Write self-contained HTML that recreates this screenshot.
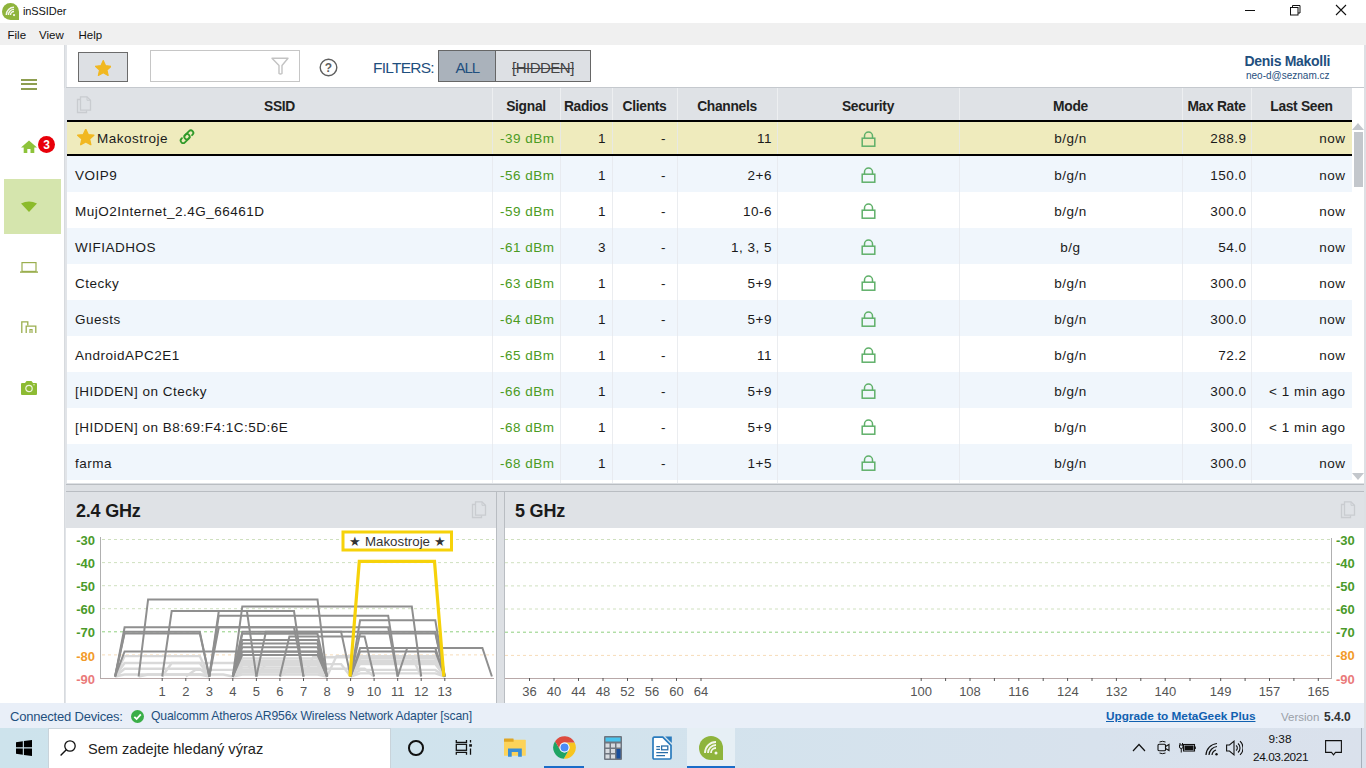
<!DOCTYPE html><html><head><meta charset="utf-8"><style>
*{margin:0;padding:0;box-sizing:border-box}
html,body{width:1366px;height:768px;overflow:hidden;background:#fff;font-family:"Liberation Sans", sans-serif;color:#1a1a1a}
.a{position:absolute}
.t{position:absolute;white-space:pre;line-height:1}
</style></head><body><div class="a" style="left:0;top:0;width:1366px;height:23px;background:#fff"></div>
<svg class="a" style="left:2px;top:3px" width="17" height="17" viewBox="0 0 24 24">
<path d="M12 0 A12 12 0 1 0 12 24 H24 V12 A12 12 0 0 0 12 0Z" fill="#8eb43c"/>
<path d="M6 17 A11 11 0 0 1 17 6" stroke="#f4f7ea" stroke-width="2" fill="none"/>
<path d="M9 17 A8 8 0 0 1 17 9" stroke="#f4f7ea" stroke-width="2" fill="none"/>
<path d="M12 17 A5 5 0 0 1 17 12" stroke="#f4f7ea" stroke-width="2" fill="none"/>
<circle cx="17" cy="17" r="1.6" fill="#f4f7ea"/></svg>
<div class="t" style="left:23px;top:6px;font-size:11px;letter-spacing:-0.1px;color:#111">inSSIDer</div>
<div class="a" style="left:1245px;top:10px;width:10px;height:1px;background:#111"></div>
<svg class="a" style="left:1289px;top:4px" width="13" height="13" viewBox="0 0 13 13">
<rect x="1.5" y="3.5" width="7.5" height="7.5" fill="none" stroke="#111" stroke-width="1"/>
<path d="M3.5 3.5 V1.5 H11 V9 H9" fill="none" stroke="#111" stroke-width="1"/></svg>
<svg class="a" style="left:1335px;top:4px" width="12" height="12" viewBox="0 0 12 12">
<path d="M1 1 L11 11 M11 1 L1 11" stroke="#111" stroke-width="1.1"/></svg>
<div class="a" style="left:0;top:23px;width:1366px;height:22px;background:#f0f0f0"></div>
<div class="t" style="left:7.5px;top:29.5px;font-size:11.5px;color:#111">File</div>
<div class="t" style="left:39px;top:29.5px;font-size:11.5px;color:#111">View</div>
<div class="t" style="left:78.5px;top:29.5px;font-size:11.5px;color:#111">Help</div>
<div class="a" style="left:0;top:45px;width:64px;height:658px;background:#fff"></div>
<div class="a" style="left:64px;top:45px;width:3px;height:658px;background:#e1e4e8"></div>
<div class="a" style="left:64px;top:45px;width:1px;height:658px;background:#d7dade"></div>
<div class="a" style="left:21px;top:79px;width:16px;height:1.5px;background:#8e9e50"></div>
<div class="a" style="left:21px;top:83px;width:16px;height:1.5px;background:#8e9e50"></div>
<div class="a" style="left:21px;top:87.5px;width:16px;height:2px;background:#8e9e50"></div>
<svg class="a" style="left:21px;top:140px" width="16" height="13" viewBox="0 0 16 13">
<path d="M0 7.5 L8 0.5 L16 7.5 L13.3 7.5 L13.3 13 L9.5 13 L9.5 9 L6.3 9 L6.3 13 L2.7 13 L2.7 7.5 Z" fill="#8dc33a"/></svg>
<div class="a" style="left:38px;top:136px;width:17px;height:17px;border-radius:50%;background:#e8000a"></div>
<div class="t" style="left:38px;top:138.5px;width:17px;text-align:center;font-size:12px;font-weight:bold;color:#fff">3</div>
<div class="a" style="left:4px;top:179px;width:57px;height:55px;background:#d5e5ad"></div>
<svg class="a" style="left:21px;top:201px" width="16" height="11" viewBox="0 0 16 11">
<path d="M0 2.5 Q8 -1.5 16 2.5 L8 11 Z" fill="#8cbb2c"/></svg>
<svg class="a" style="left:20px;top:262px" width="18" height="11" viewBox="0 0 18 11">
<rect x="2" y="0.6" width="14" height="8.8" fill="none" stroke="#9aae4e" stroke-width="1.2"/>
<rect x="0" y="9.4" width="18" height="1.4" fill="#9aae4e"/></svg>
<svg class="a" style="left:21px;top:321px" width="16" height="12" viewBox="0 0 16 12">
<path d="M0.8 12 V0.8 H6.8 V4.5" fill="none" stroke="#9aae4e" stroke-width="1.3"/>
<path d="M5.2 12 V5.2 H14.8 V12" fill="none" stroke="#9aae4e" stroke-width="1.3"/>
<path d="M9 12 V8.5 H11 V12" fill="none" stroke="#9aae4e" stroke-width="1.2"/></svg>
<svg class="a" style="left:21px;top:381px" width="16" height="14" viewBox="0 0 16 14">
<path d="M0 3 Q0 2 1 2 L4 2 L5.5 0 L10.5 0 L12 2 L15 2 Q16 2 16 3 L16 13 Q16 14 15 14 L1 14 Q0 14 0 13Z" fill="#8dbb33"/>
<circle cx="8" cy="7.5" r="3.2" fill="none" stroke="#eef5dd" stroke-width="1.2"/>
<circle cx="13" cy="3.8" r="0.7" fill="#eef5dd"/></svg>
<div class="a" style="left:67px;top:45px;width:1299px;height:42px;background:#fff"></div>
<div class="a" style="left:66px;top:87px;width:1300px;height:1px;background:#c5c9ce"></div>
<div class="a" style="left:78px;top:52px;width:50px;height:30px;background:#dde0e4;border:1px solid #6b6b6b"></div>
<svg class="a" style="left:94.5px;top:59.5px" width="16.5" height="16.5" viewBox="1.2 1 21.6 21">
<path d="M12 1.5 L15.1 8.1 L22.3 8.9 L16.9 13.8 L18.4 20.9 L12 17.3 L5.6 20.9 L7.1 13.8 L1.7 8.9 L8.9 8.1Z" fill="#f1b821" stroke="#f1b821" stroke-width="1.5" stroke-linejoin="round"/></svg>
<div class="a" style="left:150px;top:50px;width:150px;height:32px;border:1px solid #c6c6c6;background:#fff"></div>
<svg class="a" style="left:271px;top:57px" width="18" height="18" viewBox="0 0 18 18">
<path d="M1 1.2 H17 L11 8.5 V16.5 Q9.5 17.5 8 16.5 V8.5 Z" fill="none" stroke="#c3c3c3" stroke-width="1.4" stroke-linejoin="round"/></svg>
<svg class="a" style="left:319px;top:58px" width="19" height="19" viewBox="0 0 19 19">
<circle cx="9.5" cy="9.5" r="8.3" fill="none" stroke="#5f5f5f" stroke-width="1.4"/>
<text x="9.5" y="14" text-anchor="middle" font-family="Liberation Sans" font-weight="bold" font-size="12" fill="#5f5f5f">?</text></svg>
<div class="t" style="left:373px;top:60px;font-size:15.5px;color:#1f4f7e;letter-spacing:-0.75px">FILTERS:</div>
<div class="a" style="left:438px;top:50px;width:58px;height:32px;background:#aab2bb;border:1px solid #666"></div>
<div class="a" style="left:495px;top:50px;width:96px;height:32px;background:#dde0e4;border:1px solid #666"></div>
<div class="t" style="left:455.5px;top:60px;font-size:15px;color:#1f4f7e;letter-spacing:-1px">ALL</div>
<div class="t" style="left:512px;top:60px;font-size:15px;color:#444;letter-spacing:-0.5px;text-decoration:line-through">[HIDDEN]</div>
<div class="t" style="left:1244.5px;top:53.6px;font-size:14px;letter-spacing:-0.3px;font-weight:bold;color:#1f4f7e">Denis Makolli</div>
<div class="t" style="left:1246px;top:71px;font-size:10px;color:#1f4f7e">neo-d@seznam.cz</div>
<div class="a" style="left:64px;top:88px;width:1288px;height:32px;background:#dfe2e6"></div>
<div class="a" style="left:492px;top:88px;width:1px;height:32px;background:#edeff1"></div>
<div class="a" style="left:560px;top:88px;width:1px;height:32px;background:#edeff1"></div>
<div class="a" style="left:612px;top:88px;width:1px;height:32px;background:#edeff1"></div>
<div class="a" style="left:677px;top:88px;width:1px;height:32px;background:#edeff1"></div>
<div class="a" style="left:777px;top:88px;width:1px;height:32px;background:#edeff1"></div>
<div class="a" style="left:959px;top:88px;width:1px;height:32px;background:#edeff1"></div>
<div class="a" style="left:1182px;top:88px;width:1px;height:32px;background:#edeff1"></div>
<div class="a" style="left:1251px;top:88px;width:1px;height:32px;background:#edeff1"></div>
<div class="t" style="left:67px;top:99.6px;width:425px;text-align:center;font-size:13.8px;letter-spacing:-0.3px;font-weight:bold;color:#222">SSID</div>
<div class="t" style="left:492px;top:99.6px;width:68px;text-align:center;font-size:13.8px;letter-spacing:-0.3px;font-weight:bold;color:#222">Signal</div>
<div class="t" style="left:560px;top:99.6px;width:52px;text-align:center;font-size:13.8px;letter-spacing:-0.3px;font-weight:bold;color:#222">Radios</div>
<div class="t" style="left:612px;top:99.6px;width:65px;text-align:center;font-size:13.8px;letter-spacing:-0.3px;font-weight:bold;color:#222">Clients</div>
<div class="t" style="left:677px;top:99.6px;width:100px;text-align:center;font-size:13.8px;letter-spacing:-0.3px;font-weight:bold;color:#222">Channels</div>
<div class="t" style="left:777px;top:99.6px;width:182px;text-align:center;font-size:13.8px;letter-spacing:-0.3px;font-weight:bold;color:#222">Security</div>
<div class="t" style="left:959px;top:99.6px;width:223px;text-align:center;font-size:13.8px;letter-spacing:-0.3px;font-weight:bold;color:#222">Mode</div>
<div class="t" style="left:1182px;top:99.6px;width:69px;text-align:center;font-size:13.8px;letter-spacing:-0.3px;font-weight:bold;color:#222">Max Rate</div>
<div class="t" style="left:1251px;top:99.6px;width:101px;text-align:center;font-size:13.8px;letter-spacing:-0.3px;font-weight:bold;color:#222">Last Seen</div>
<svg class="a" style="left:76px;top:96px" width="16" height="18" viewBox="0 0 16 18">
<path d="M4.5 3.5 H1.5 V16.5 H10.5 V14.5" fill="none" stroke="#c9ccd0" stroke-width="1.3"/>
<path d="M4.5 0.8 H11 L14.5 4.3 V14.2 H4.5 Z" fill="none" stroke="#c9ccd0" stroke-width="1.3"/>
<path d="M11 0.8 V4.3 H14.5" fill="none" stroke="#c9ccd0" stroke-width="1"/></svg>
<div class="a" style="left:67px;top:120px;width:1285px;height:363px;background:#fff"></div>
<div class="a" style="left:67px;top:120px;width:1285px;height:36px;background:#efebbd;border-top:2px solid #000;border-bottom:2px solid #000"></div>
<svg class="a" style="left:77px;top:129px" width="17.5" height="16.5" viewBox="1.2 1 21.6 21">
<path d="M12 1.5 L15.1 8.1 L22.3 8.9 L16.9 13.8 L18.4 20.9 L12 17.3 L5.6 20.9 L7.1 13.8 L1.7 8.9 L8.9 8.1Z" fill="#f1b821" stroke="#f1b821" stroke-width="1.8" stroke-linejoin="round"/></svg>
<div class="t" style="left:97px;top:131.5px;font-size:13.5px;letter-spacing:0.5px">Makostroje</div>
<svg class="a" style="left:178px;top:128px" width="18" height="18" viewBox="0 0 18 18">
<g transform="translate(9 8.7) rotate(-45)" fill="none" stroke="#309a2a" stroke-width="1.8" stroke-linecap="round">
<path d="M1.2 2.5 H-0.2 A2.5 2.5 0 0 1 -0.2 -2.5 H5.4 A2.5 2.5 0 0 1 5.4 2.5 H4.6"/>
<path d="M-1.2 -2.5 H0.2 A2.5 2.5 0 0 1 0.2 2.5 H-5.4 A2.5 2.5 0 0 1 -5.4 -2.5 H-4.6"/></g></svg>
<div class="t" style="left:492px;top:131.5px;width:62.5px;text-align:right;font-size:13.5px;letter-spacing:0.5px;color:#4b9b23">-39 dBm</div>
<div class="t" style="left:560px;top:131.5px;width:46px;text-align:right;font-size:13.5px;letter-spacing:0.5px">1</div>
<div class="t" style="left:612px;top:131.5px;width:54px;text-align:right;font-size:13.5px;letter-spacing:0.5px">-</div>
<div class="t" style="left:677px;top:131.5px;width:95px;text-align:right;font-size:13.5px;letter-spacing:0.5px">11</div>
<svg class="a" style="left:861.0px;top:131px" width="15" height="16" viewBox="0 0 15 16">
<path d="M3.5 7 V5 A4 4 0 0 1 11.5 5 V7" fill="none" stroke="#5fb069" stroke-width="1.5"/>
<rect x="1.2" y="7.2" width="12.6" height="8" fill="none" stroke="#5fb069" stroke-width="1.5"/></svg>
<div class="t" style="left:959px;top:131.5px;width:223px;text-align:center;font-size:13.5px;letter-spacing:0.5px">b/g/n</div>
<div class="t" style="left:1182px;top:131.5px;width:64.5px;text-align:right;font-size:13.5px;letter-spacing:0.5px">288.9</div>
<div class="t" style="left:1251px;top:131.5px;width:94.5px;text-align:right;font-size:13.5px;letter-spacing:0.5px">now</div>
<div class="a" style="left:67px;top:156px;width:1285px;height:36px;background:#f0f6fc"></div>
<div class="t" style="left:75px;top:168.5px;font-size:13.5px;letter-spacing:0.5px">VOIP9</div>
<div class="t" style="left:492px;top:168.5px;width:62.5px;text-align:right;font-size:13.5px;letter-spacing:0.5px;color:#4b9b23">-56 dBm</div>
<div class="t" style="left:560px;top:168.5px;width:46px;text-align:right;font-size:13.5px;letter-spacing:0.5px">1</div>
<div class="t" style="left:612px;top:168.5px;width:54px;text-align:right;font-size:13.5px;letter-spacing:0.5px">-</div>
<div class="t" style="left:677px;top:168.5px;width:95px;text-align:right;font-size:13.5px;letter-spacing:0.5px">2+6</div>
<svg class="a" style="left:861.0px;top:167px" width="15" height="16" viewBox="0 0 15 16">
<path d="M3.5 7 V5 A4 4 0 0 1 11.5 5 V7" fill="none" stroke="#5fb069" stroke-width="1.5"/>
<rect x="1.2" y="7.2" width="12.6" height="8" fill="none" stroke="#5fb069" stroke-width="1.5"/></svg>
<div class="t" style="left:959px;top:168.5px;width:223px;text-align:center;font-size:13.5px;letter-spacing:0.5px">b/g/n</div>
<div class="t" style="left:1182px;top:168.5px;width:64.5px;text-align:right;font-size:13.5px;letter-spacing:0.5px">150.0</div>
<div class="t" style="left:1251px;top:168.5px;width:94.5px;text-align:right;font-size:13.5px;letter-spacing:0.5px">now</div>
<div class="a" style="left:67px;top:192px;width:1285px;height:36px;background:#ffffff"></div>
<div class="t" style="left:75px;top:204.5px;font-size:13.5px;letter-spacing:0.5px">MujO2Internet_2.4G_66461D</div>
<div class="t" style="left:492px;top:204.5px;width:62.5px;text-align:right;font-size:13.5px;letter-spacing:0.5px;color:#4b9b23">-59 dBm</div>
<div class="t" style="left:560px;top:204.5px;width:46px;text-align:right;font-size:13.5px;letter-spacing:0.5px">1</div>
<div class="t" style="left:612px;top:204.5px;width:54px;text-align:right;font-size:13.5px;letter-spacing:0.5px">-</div>
<div class="t" style="left:677px;top:204.5px;width:95px;text-align:right;font-size:13.5px;letter-spacing:0.5px">10-6</div>
<svg class="a" style="left:861.0px;top:203px" width="15" height="16" viewBox="0 0 15 16">
<path d="M3.5 7 V5 A4 4 0 0 1 11.5 5 V7" fill="none" stroke="#5fb069" stroke-width="1.5"/>
<rect x="1.2" y="7.2" width="12.6" height="8" fill="none" stroke="#5fb069" stroke-width="1.5"/></svg>
<div class="t" style="left:959px;top:204.5px;width:223px;text-align:center;font-size:13.5px;letter-spacing:0.5px">b/g/n</div>
<div class="t" style="left:1182px;top:204.5px;width:64.5px;text-align:right;font-size:13.5px;letter-spacing:0.5px">300.0</div>
<div class="t" style="left:1251px;top:204.5px;width:94.5px;text-align:right;font-size:13.5px;letter-spacing:0.5px">now</div>
<div class="a" style="left:67px;top:228px;width:1285px;height:36px;background:#f0f6fc"></div>
<div class="t" style="left:75px;top:240.5px;font-size:13.5px;letter-spacing:0.5px">WIFIADHOS</div>
<div class="t" style="left:492px;top:240.5px;width:62.5px;text-align:right;font-size:13.5px;letter-spacing:0.5px;color:#4b9b23">-61 dBm</div>
<div class="t" style="left:560px;top:240.5px;width:46px;text-align:right;font-size:13.5px;letter-spacing:0.5px">3</div>
<div class="t" style="left:612px;top:240.5px;width:54px;text-align:right;font-size:13.5px;letter-spacing:0.5px">-</div>
<div class="t" style="left:677px;top:240.5px;width:95px;text-align:right;font-size:13.5px;letter-spacing:0.5px">1, 3, 5</div>
<svg class="a" style="left:861.0px;top:239px" width="15" height="16" viewBox="0 0 15 16">
<path d="M3.5 7 V5 A4 4 0 0 1 11.5 5 V7" fill="none" stroke="#5fb069" stroke-width="1.5"/>
<rect x="1.2" y="7.2" width="12.6" height="8" fill="none" stroke="#5fb069" stroke-width="1.5"/></svg>
<div class="t" style="left:959px;top:240.5px;width:223px;text-align:center;font-size:13.5px;letter-spacing:0.5px">b/g</div>
<div class="t" style="left:1182px;top:240.5px;width:64.5px;text-align:right;font-size:13.5px;letter-spacing:0.5px">54.0</div>
<div class="t" style="left:1251px;top:240.5px;width:94.5px;text-align:right;font-size:13.5px;letter-spacing:0.5px">now</div>
<div class="a" style="left:67px;top:264px;width:1285px;height:36px;background:#ffffff"></div>
<div class="t" style="left:75px;top:276.5px;font-size:13.5px;letter-spacing:0.5px">Ctecky</div>
<div class="t" style="left:492px;top:276.5px;width:62.5px;text-align:right;font-size:13.5px;letter-spacing:0.5px;color:#4b9b23">-63 dBm</div>
<div class="t" style="left:560px;top:276.5px;width:46px;text-align:right;font-size:13.5px;letter-spacing:0.5px">1</div>
<div class="t" style="left:612px;top:276.5px;width:54px;text-align:right;font-size:13.5px;letter-spacing:0.5px">-</div>
<div class="t" style="left:677px;top:276.5px;width:95px;text-align:right;font-size:13.5px;letter-spacing:0.5px">5+9</div>
<svg class="a" style="left:861.0px;top:275px" width="15" height="16" viewBox="0 0 15 16">
<path d="M3.5 7 V5 A4 4 0 0 1 11.5 5 V7" fill="none" stroke="#5fb069" stroke-width="1.5"/>
<rect x="1.2" y="7.2" width="12.6" height="8" fill="none" stroke="#5fb069" stroke-width="1.5"/></svg>
<div class="t" style="left:959px;top:276.5px;width:223px;text-align:center;font-size:13.5px;letter-spacing:0.5px">b/g/n</div>
<div class="t" style="left:1182px;top:276.5px;width:64.5px;text-align:right;font-size:13.5px;letter-spacing:0.5px">300.0</div>
<div class="t" style="left:1251px;top:276.5px;width:94.5px;text-align:right;font-size:13.5px;letter-spacing:0.5px">now</div>
<div class="a" style="left:67px;top:300px;width:1285px;height:36px;background:#f0f6fc"></div>
<div class="t" style="left:75px;top:312.5px;font-size:13.5px;letter-spacing:0.5px">Guests</div>
<div class="t" style="left:492px;top:312.5px;width:62.5px;text-align:right;font-size:13.5px;letter-spacing:0.5px;color:#4b9b23">-64 dBm</div>
<div class="t" style="left:560px;top:312.5px;width:46px;text-align:right;font-size:13.5px;letter-spacing:0.5px">1</div>
<div class="t" style="left:612px;top:312.5px;width:54px;text-align:right;font-size:13.5px;letter-spacing:0.5px">-</div>
<div class="t" style="left:677px;top:312.5px;width:95px;text-align:right;font-size:13.5px;letter-spacing:0.5px">5+9</div>
<svg class="a" style="left:861.0px;top:311px" width="15" height="16" viewBox="0 0 15 16">
<path d="M3.5 7 V5 A4 4 0 0 1 11.5 5 V7" fill="none" stroke="#5fb069" stroke-width="1.5"/>
<rect x="1.2" y="7.2" width="12.6" height="8" fill="none" stroke="#5fb069" stroke-width="1.5"/></svg>
<div class="t" style="left:959px;top:312.5px;width:223px;text-align:center;font-size:13.5px;letter-spacing:0.5px">b/g/n</div>
<div class="t" style="left:1182px;top:312.5px;width:64.5px;text-align:right;font-size:13.5px;letter-spacing:0.5px">300.0</div>
<div class="t" style="left:1251px;top:312.5px;width:94.5px;text-align:right;font-size:13.5px;letter-spacing:0.5px">now</div>
<div class="a" style="left:67px;top:336px;width:1285px;height:36px;background:#ffffff"></div>
<div class="t" style="left:75px;top:348.5px;font-size:13.5px;letter-spacing:0.5px">AndroidAPC2E1</div>
<div class="t" style="left:492px;top:348.5px;width:62.5px;text-align:right;font-size:13.5px;letter-spacing:0.5px;color:#4b9b23">-65 dBm</div>
<div class="t" style="left:560px;top:348.5px;width:46px;text-align:right;font-size:13.5px;letter-spacing:0.5px">1</div>
<div class="t" style="left:612px;top:348.5px;width:54px;text-align:right;font-size:13.5px;letter-spacing:0.5px">-</div>
<div class="t" style="left:677px;top:348.5px;width:95px;text-align:right;font-size:13.5px;letter-spacing:0.5px">11</div>
<svg class="a" style="left:861.0px;top:347px" width="15" height="16" viewBox="0 0 15 16">
<path d="M3.5 7 V5 A4 4 0 0 1 11.5 5 V7" fill="none" stroke="#5fb069" stroke-width="1.5"/>
<rect x="1.2" y="7.2" width="12.6" height="8" fill="none" stroke="#5fb069" stroke-width="1.5"/></svg>
<div class="t" style="left:959px;top:348.5px;width:223px;text-align:center;font-size:13.5px;letter-spacing:0.5px">b/g/n</div>
<div class="t" style="left:1182px;top:348.5px;width:64.5px;text-align:right;font-size:13.5px;letter-spacing:0.5px">72.2</div>
<div class="t" style="left:1251px;top:348.5px;width:94.5px;text-align:right;font-size:13.5px;letter-spacing:0.5px">now</div>
<div class="a" style="left:67px;top:372px;width:1285px;height:36px;background:#f0f6fc"></div>
<div class="t" style="left:75px;top:384.5px;font-size:13.5px;letter-spacing:0.5px">[HIDDEN] on Ctecky</div>
<div class="t" style="left:492px;top:384.5px;width:62.5px;text-align:right;font-size:13.5px;letter-spacing:0.5px;color:#4b9b23">-66 dBm</div>
<div class="t" style="left:560px;top:384.5px;width:46px;text-align:right;font-size:13.5px;letter-spacing:0.5px">1</div>
<div class="t" style="left:612px;top:384.5px;width:54px;text-align:right;font-size:13.5px;letter-spacing:0.5px">-</div>
<div class="t" style="left:677px;top:384.5px;width:95px;text-align:right;font-size:13.5px;letter-spacing:0.5px">5+9</div>
<svg class="a" style="left:861.0px;top:383px" width="15" height="16" viewBox="0 0 15 16">
<path d="M3.5 7 V5 A4 4 0 0 1 11.5 5 V7" fill="none" stroke="#5fb069" stroke-width="1.5"/>
<rect x="1.2" y="7.2" width="12.6" height="8" fill="none" stroke="#5fb069" stroke-width="1.5"/></svg>
<div class="t" style="left:959px;top:384.5px;width:223px;text-align:center;font-size:13.5px;letter-spacing:0.5px">b/g/n</div>
<div class="t" style="left:1182px;top:384.5px;width:64.5px;text-align:right;font-size:13.5px;letter-spacing:0.5px">300.0</div>
<div class="t" style="left:1251px;top:384.5px;width:94.5px;text-align:right;font-size:13.5px;letter-spacing:0.5px">&lt; 1 min ago</div>
<div class="a" style="left:67px;top:408px;width:1285px;height:36px;background:#ffffff"></div>
<div class="t" style="left:75px;top:420.5px;font-size:13.5px;letter-spacing:0.5px">[HIDDEN] on B8:69:F4:1C:5D:6E</div>
<div class="t" style="left:492px;top:420.5px;width:62.5px;text-align:right;font-size:13.5px;letter-spacing:0.5px;color:#4b9b23">-68 dBm</div>
<div class="t" style="left:560px;top:420.5px;width:46px;text-align:right;font-size:13.5px;letter-spacing:0.5px">1</div>
<div class="t" style="left:612px;top:420.5px;width:54px;text-align:right;font-size:13.5px;letter-spacing:0.5px">-</div>
<div class="t" style="left:677px;top:420.5px;width:95px;text-align:right;font-size:13.5px;letter-spacing:0.5px">5+9</div>
<svg class="a" style="left:861.0px;top:419px" width="15" height="16" viewBox="0 0 15 16">
<path d="M3.5 7 V5 A4 4 0 0 1 11.5 5 V7" fill="none" stroke="#5fb069" stroke-width="1.5"/>
<rect x="1.2" y="7.2" width="12.6" height="8" fill="none" stroke="#5fb069" stroke-width="1.5"/></svg>
<div class="t" style="left:959px;top:420.5px;width:223px;text-align:center;font-size:13.5px;letter-spacing:0.5px">b/g/n</div>
<div class="t" style="left:1182px;top:420.5px;width:64.5px;text-align:right;font-size:13.5px;letter-spacing:0.5px">300.0</div>
<div class="t" style="left:1251px;top:420.5px;width:94.5px;text-align:right;font-size:13.5px;letter-spacing:0.5px">&lt; 1 min ago</div>
<div class="a" style="left:67px;top:444px;width:1285px;height:36px;background:#f0f6fc"></div>
<div class="t" style="left:75px;top:456.5px;font-size:13.5px;letter-spacing:0.5px">farma</div>
<div class="t" style="left:492px;top:456.5px;width:62.5px;text-align:right;font-size:13.5px;letter-spacing:0.5px;color:#4b9b23">-68 dBm</div>
<div class="t" style="left:560px;top:456.5px;width:46px;text-align:right;font-size:13.5px;letter-spacing:0.5px">1</div>
<div class="t" style="left:612px;top:456.5px;width:54px;text-align:right;font-size:13.5px;letter-spacing:0.5px">-</div>
<div class="t" style="left:677px;top:456.5px;width:95px;text-align:right;font-size:13.5px;letter-spacing:0.5px">1+5</div>
<svg class="a" style="left:861.0px;top:455px" width="15" height="16" viewBox="0 0 15 16">
<path d="M3.5 7 V5 A4 4 0 0 1 11.5 5 V7" fill="none" stroke="#5fb069" stroke-width="1.5"/>
<rect x="1.2" y="7.2" width="12.6" height="8" fill="none" stroke="#5fb069" stroke-width="1.5"/></svg>
<div class="t" style="left:959px;top:456.5px;width:223px;text-align:center;font-size:13.5px;letter-spacing:0.5px">b/g/n</div>
<div class="t" style="left:1182px;top:456.5px;width:64.5px;text-align:right;font-size:13.5px;letter-spacing:0.5px">300.0</div>
<div class="t" style="left:1251px;top:456.5px;width:94.5px;text-align:right;font-size:13.5px;letter-spacing:0.5px">now</div>
<div class="a" style="left:492px;top:122px;width:1px;height:361px;background:#e6e9ec;opacity:0.8"></div>
<div class="a" style="left:560px;top:122px;width:1px;height:361px;background:#e6e9ec;opacity:0.8"></div>
<div class="a" style="left:612px;top:122px;width:1px;height:361px;background:#e6e9ec;opacity:0.8"></div>
<div class="a" style="left:677px;top:122px;width:1px;height:361px;background:#e6e9ec;opacity:0.8"></div>
<div class="a" style="left:777px;top:122px;width:1px;height:361px;background:#e6e9ec;opacity:0.8"></div>
<div class="a" style="left:959px;top:122px;width:1px;height:361px;background:#e6e9ec;opacity:0.8"></div>
<div class="a" style="left:1182px;top:122px;width:1px;height:361px;background:#e6e9ec;opacity:0.8"></div>
<div class="a" style="left:1251px;top:122px;width:1px;height:361px;background:#e6e9ec;opacity:0.8"></div>
<div class="a" style="left:67px;top:120px;width:1285px;height:2px;background:#000"></div>
<div class="a" style="left:67px;top:154px;width:1285px;height:2px;background:#000"></div>
<div class="a" style="left:1352px;top:88px;width:14px;height:395px;background:#fff"></div>
<svg class="a" style="left:1352px;top:122px" width="12" height="8" viewBox="0 0 12 8"><path d="M0 8 L6 1 L12 8Z" fill="#c3c7cc"/></svg>
<div class="a" style="left:1354px;top:132px;width:9px;height:55px;background:#c3c7cc"></div>
<svg class="a" style="left:1352px;top:473px" width="12" height="8" viewBox="0 0 12 8"><path d="M0 0 L6 7 L12 0Z" fill="#c3c7cc"/></svg>
<div class="a" style="left:1364px;top:88px;width:2px;height:615px;background:#e6e8eb"></div>
<div class="a" style="left:66px;top:483px;width:1300px;height:9px;background:#dde0e4"></div>
<div class="a" style="left:66px;top:484px;width:1300px;height:1px;background:#b9bdc2"></div>
<div class="a" style="left:66px;top:491px;width:1300px;height:1px;background:#b9bdc2"></div>
<div class="a" style="left:66px;top:492px;width:431px;height:36px;background:#dfe2e6"></div>
<div class="t" style="left:76px;top:502px;font-size:18px;font-weight:bold;letter-spacing:-0.2px;color:#1a1a1a">2.4 GHz</div>
<svg class="a" style="left:471px;top:501px" width="16" height="18" viewBox="0 0 16 18">
<path d="M4.5 3.5 H1.5 V16.5 H10.5 V14.5" fill="none" stroke="#c9ccd0" stroke-width="1.3"/>
<path d="M4.5 0.8 H11 L14.5 4.3 V14.2 H4.5 Z" fill="none" stroke="#c9ccd0" stroke-width="1.3"/>
<path d="M11 0.8 V4.3 H14.5" fill="none" stroke="#c9ccd0" stroke-width="1"/></svg>
<div class="a" style="left:66px;top:528px;width:431px;height:175px;background:#fff"></div>
<div class="a" style="left:496px;top:492px;width:9px;height:211px;background:#dde0e4"></div>
<div class="a" style="left:496px;top:492px;width:1px;height:211px;background:#b9bdc2"></div>
<div class="a" style="left:504px;top:492px;width:1px;height:211px;background:#b9bdc2"></div>
<div class="a" style="left:505px;top:492px;width:861px;height:36px;background:#dfe2e6"></div>
<div class="t" style="left:515px;top:502px;font-size:18px;font-weight:bold;letter-spacing:-0.2px;color:#1a1a1a">5 GHz</div>
<svg class="a" style="left:1340px;top:501px" width="16" height="18" viewBox="0 0 16 18">
<path d="M4.5 3.5 H1.5 V16.5 H10.5 V14.5" fill="none" stroke="#c9ccd0" stroke-width="1.3"/>
<path d="M4.5 0.8 H11 L14.5 4.3 V14.2 H4.5 Z" fill="none" stroke="#c9ccd0" stroke-width="1.3"/>
<path d="M11 0.8 V4.3 H14.5" fill="none" stroke="#c9ccd0" stroke-width="1"/></svg>
<div class="a" style="left:505px;top:528px;width:861px;height:175px;background:#fff"></div>
<svg class="a" style="left:66px;top:528px" width="430" height="175" viewBox="66 528 430 175">
<line x1="102" y1="539.5" x2="494" y2="539.5" stroke="#cfe0bf" stroke-width="1" stroke-dasharray="3 3"/>
<line x1="102" y1="562.6" x2="494" y2="562.6" stroke="#cfe0bf" stroke-width="1" stroke-dasharray="3 3"/>
<line x1="102" y1="585.7" x2="494" y2="585.7" stroke="#cfe0bf" stroke-width="1" stroke-dasharray="3 3"/>
<line x1="102" y1="608.7" x2="494" y2="608.7" stroke="#cfe0bf" stroke-width="1" stroke-dasharray="3 3"/>
<line x1="102" y1="631.8" x2="494" y2="631.8" stroke="#8fcf7f" stroke-width="1" stroke-dasharray="3 3"/>
<line x1="102" y1="654.9" x2="494" y2="654.9" stroke="#f7dcb8" stroke-width="1" stroke-dasharray="3 3"/>
<line x1="100.5" y1="537" x2="100.5" y2="678.5" stroke="#b0b0b0" stroke-width="1"/>
<line x1="100" y1="678.5" x2="494" y2="678.5" stroke="#b8a8a8" stroke-width="1"/>
<line x1="162.2" y1="678" x2="162.2" y2="681" stroke="#555" stroke-width="1"/>
<line x1="185.8" y1="678" x2="185.8" y2="681" stroke="#555" stroke-width="1"/>
<line x1="209.3" y1="678" x2="209.3" y2="681" stroke="#555" stroke-width="1"/>
<line x1="232.8" y1="678" x2="232.8" y2="681" stroke="#555" stroke-width="1"/>
<line x1="256.4" y1="678" x2="256.4" y2="681" stroke="#555" stroke-width="1"/>
<line x1="279.9" y1="678" x2="279.9" y2="681" stroke="#555" stroke-width="1"/>
<line x1="303.5" y1="678" x2="303.5" y2="681" stroke="#555" stroke-width="1"/>
<line x1="327.0" y1="678" x2="327.0" y2="681" stroke="#555" stroke-width="1"/>
<line x1="350.6" y1="678" x2="350.6" y2="681" stroke="#555" stroke-width="1"/>
<line x1="374.1" y1="678" x2="374.1" y2="681" stroke="#555" stroke-width="1"/>
<line x1="397.7" y1="678" x2="397.7" y2="681" stroke="#555" stroke-width="1"/>
<line x1="421.2" y1="678" x2="421.2" y2="681" stroke="#555" stroke-width="1"/>
<line x1="444.8" y1="678" x2="444.8" y2="681" stroke="#555" stroke-width="1"/>
<text x="95" y="545.1" text-anchor="end" font-family="Liberation Sans" font-weight="bold" font-size="13" fill="#4a9a2a">-30</text>
<text x="95" y="568.2" text-anchor="end" font-family="Liberation Sans" font-weight="bold" font-size="13" fill="#4a9a2a">-40</text>
<text x="95" y="591.3" text-anchor="end" font-family="Liberation Sans" font-weight="bold" font-size="13" fill="#4a9a2a">-50</text>
<text x="95" y="614.3" text-anchor="end" font-family="Liberation Sans" font-weight="bold" font-size="13" fill="#4a9a2a">-60</text>
<text x="95" y="637.4" text-anchor="end" font-family="Liberation Sans" font-weight="bold" font-size="13" fill="#4a9a2a">-70</text>
<text x="95" y="660.5" text-anchor="end" font-family="Liberation Sans" font-weight="bold" font-size="13" fill="#f29b2a">-80</text>
<text x="95" y="683.6" text-anchor="end" font-family="Liberation Sans" font-weight="bold" font-size="13" fill="#ea7a7a">-90</text>
<text x="162.2" y="696" text-anchor="middle" font-family="Liberation Sans" font-size="13" fill="#555">1</text>
<text x="185.8" y="696" text-anchor="middle" font-family="Liberation Sans" font-size="13" fill="#555">2</text>
<text x="209.3" y="696" text-anchor="middle" font-family="Liberation Sans" font-size="13" fill="#555">3</text>
<text x="232.8" y="696" text-anchor="middle" font-family="Liberation Sans" font-size="13" fill="#555">4</text>
<text x="256.4" y="696" text-anchor="middle" font-family="Liberation Sans" font-size="13" fill="#555">5</text>
<text x="279.9" y="696" text-anchor="middle" font-family="Liberation Sans" font-size="13" fill="#555">6</text>
<text x="303.5" y="696" text-anchor="middle" font-family="Liberation Sans" font-size="13" fill="#555">7</text>
<text x="327.0" y="696" text-anchor="middle" font-family="Liberation Sans" font-size="13" fill="#555">8</text>
<text x="350.6" y="696" text-anchor="middle" font-family="Liberation Sans" font-size="13" fill="#555">9</text>
<text x="374.1" y="696" text-anchor="middle" font-family="Liberation Sans" font-size="13" fill="#555">10</text>
<text x="397.7" y="696" text-anchor="middle" font-family="Liberation Sans" font-size="13" fill="#555">11</text>
<text x="421.2" y="696" text-anchor="middle" font-family="Liberation Sans" font-size="13" fill="#555">12</text>
<text x="444.8" y="696" text-anchor="middle" font-family="Liberation Sans" font-size="13" fill="#555">13</text>
<path d="M115.1 676.5 L124.6 656.1 L199.8 656.1 L209.3 676.5" fill="none" stroke="#d9d9d9" stroke-width="2.4"/>
<path d="M115.1 676.5 L124.6 663.0 L199.8 663.0 L209.3 676.5" fill="none" stroke="#d9d9d9" stroke-width="2.4"/>
<path d="M115.1 676.5 L124.6 668.7 L199.8 668.7 L209.3 676.5" fill="none" stroke="#d9d9d9" stroke-width="2.4"/>
<path d="M115.1 676.5 L124.6 674.5 L199.8 674.5 L209.3 676.5" fill="none" stroke="#d9d9d9" stroke-width="2.4"/>
<path d="M162.2 676.5 L171.7 663.0 L246.9 663.0 L256.4 676.5" fill="none" stroke="#d9d9d9" stroke-width="2.4"/>
<path d="M185.8 676.5 L195.2 669.9 L317.5 669.9 L327.0 676.5" fill="none" stroke="#d9d9d9" stroke-width="2.4"/>
<path d="M138.6 676.5 L148.1 674.5 L223.3 674.5 L232.8 676.5" fill="none" stroke="#d9d9d9" stroke-width="2.4"/>
<path d="M232.8 676.5 L242.3 658.4 L317.5 658.4 L327.0 676.5" fill="none" stroke="#d9d9d9" stroke-width="2.4"/>
<path d="M232.8 676.5 L242.3 660.7 L317.5 660.7 L327.0 676.5" fill="none" stroke="#d9d9d9" stroke-width="2.4"/>
<path d="M232.8 676.5 L242.3 663.0 L317.5 663.0 L327.0 676.5" fill="none" stroke="#d9d9d9" stroke-width="2.4"/>
<path d="M232.8 676.5 L242.3 665.3 L317.5 665.3 L327.0 676.5" fill="none" stroke="#d9d9d9" stroke-width="2.4"/>
<path d="M232.8 676.5 L242.3 667.6 L317.5 667.6 L327.0 676.5" fill="none" stroke="#d9d9d9" stroke-width="2.4"/>
<path d="M232.8 676.5 L242.3 669.9 L317.5 669.9 L327.0 676.5" fill="none" stroke="#d9d9d9" stroke-width="2.4"/>
<path d="M232.8 676.5 L242.3 672.2 L317.5 672.2 L327.0 676.5" fill="none" stroke="#d9d9d9" stroke-width="2.4"/>
<path d="M232.8 676.5 L242.3 674.5 L317.5 674.5 L327.0 676.5" fill="none" stroke="#d9d9d9" stroke-width="2.4"/>
<path d="M256.4 676.5 L265.9 664.1 L341.1 664.1 L350.6 676.5" fill="none" stroke="#d9d9d9" stroke-width="2.4"/>
<path d="M279.9 676.5 L289.4 668.7 L364.6 668.7 L374.1 676.5" fill="none" stroke="#d9d9d9" stroke-width="2.4"/>
<path d="M350.6 676.5 L360.1 656.1 L435.3 656.1 L444.8 676.5" fill="none" stroke="#d9d9d9" stroke-width="2.4"/>
<path d="M350.6 676.5 L360.1 658.4 L435.3 658.4 L444.8 676.5" fill="none" stroke="#d9d9d9" stroke-width="2.4"/>
<path d="M350.6 676.5 L360.1 660.7 L435.3 660.7 L444.8 676.5" fill="none" stroke="#d9d9d9" stroke-width="2.4"/>
<path d="M350.6 676.5 L360.1 663.0 L435.3 663.0 L444.8 676.5" fill="none" stroke="#d9d9d9" stroke-width="2.4"/>
<path d="M350.6 676.5 L360.1 664.1 L435.3 664.1 L444.8 676.5" fill="none" stroke="#d9d9d9" stroke-width="2.4"/>
<path d="M350.6 676.5 L360.1 673.4 L435.3 673.4 L444.8 676.5" fill="none" stroke="#d9d9d9" stroke-width="2.4"/>
<path d="M350.6 676.5 L360.1 669.9 L435.3 669.9 L444.8 676.5" fill="none" stroke="#d9d9d9" stroke-width="2.4"/>
<path d="M327.0 676.5 L336.5 656.1 L411.8 656.1 L421.2 676.5" fill="none" stroke="#d9d9d9" stroke-width="2.4"/>
<path d="M303.5 676.5 L313.0 657.2 L435.3 657.2 L444.8 676.5" fill="none" stroke="#d9d9d9" stroke-width="2.4"/>
<path d="M138.6 676.5 L148.1 599.5 L317.5 599.5 L327.0 676.5" fill="none" stroke="#8f8f8f" stroke-width="2"/>
<path d="M232.8 676.5 L242.3 606.4 L411.8 606.4 L421.2 676.5" fill="none" stroke="#8f8f8f" stroke-width="2"/>
<path d="M162.2 676.5 L171.7 611.0 L246.9 611.0 L256.4 676.5" fill="none" stroke="#8f8f8f" stroke-width="2"/>
<path d="M209.3 676.5 L218.8 611.0 L294.0 611.0 L303.5 676.5" fill="none" stroke="#8f8f8f" stroke-width="2"/>
<path d="M209.3 676.5 L218.8 615.7 L388.2 615.7 L397.7 676.5" fill="none" stroke="#8f8f8f" stroke-width="2"/>
<path d="M350.6 676.5 L360.1 620.3 L435.3 620.3 L444.8 676.5" fill="none" stroke="#8f8f8f" stroke-width="2"/>
<path d="M209.3 676.5 L218.8 627.2 L388.2 627.2 L397.7 676.5" fill="none" stroke="#8f8f8f" stroke-width="2"/>
<path d="M115.1 676.5 L124.6 627.2 L294.0 627.2 L303.5 676.5" fill="none" stroke="#8f8f8f" stroke-width="2"/>
<path d="M115.1 676.5 L124.6 631.8 L199.8 631.8 L209.3 676.5" fill="none" stroke="#8f8f8f" stroke-width="2"/>
<path d="M115.1 676.5 L124.6 633.4 L199.8 633.4 L209.3 676.5" fill="none" stroke="#8f8f8f" stroke-width="2"/>
<path d="M232.8 676.5 L242.3 631.8 L435.3 631.8 L444.8 676.5" fill="none" stroke="#8f8f8f" stroke-width="2"/>
<path d="M350.6 676.5 L360.1 633.4 L435.3 633.4 L444.8 676.5" fill="none" stroke="#8f8f8f" stroke-width="2"/>
<path d="M232.8 676.5 L242.3 633.7 L317.5 633.7 L327.0 676.5" fill="none" stroke="#8f8f8f" stroke-width="2"/>
<path d="M256.4 676.5 L265.9 631.8 L341.1 631.8 L350.6 676.5" fill="none" stroke="#8f8f8f" stroke-width="2"/>
<path d="M279.9 676.5 L289.4 636.4 L364.6 636.4 L374.1 676.5" fill="none" stroke="#8f8f8f" stroke-width="2"/>
<path d="M232.8 676.5 L242.3 639.9 L317.5 639.9 L327.0 676.5" fill="none" stroke="#8f8f8f" stroke-width="2"/>
<path d="M232.8 676.5 L242.3 643.4 L317.5 643.4 L327.0 676.5" fill="none" stroke="#8f8f8f" stroke-width="2"/>
<path d="M232.8 676.5 L242.3 647.3 L317.5 647.3 L327.0 676.5" fill="none" stroke="#8f8f8f" stroke-width="2"/>
<path d="M232.8 676.5 L242.3 651.7 L317.5 651.7 L327.0 676.5" fill="none" stroke="#8f8f8f" stroke-width="2"/>
<path d="M232.8 676.5 L242.3 654.9 L317.5 654.9 L327.0 676.5" fill="none" stroke="#8f8f8f" stroke-width="2"/>
<path d="M350.6 676.5 L360.1 648.0 L435.3 648.0 L444.8 676.5" fill="none" stroke="#8f8f8f" stroke-width="2"/>
<path d="M397.7 676.5 L407.2 648.0 L482.4 648.0 L491.9 676.5" fill="none" stroke="#8f8f8f" stroke-width="2"/>
<path d="M115.1 676.5 L124.6 651.4 L317.5 651.4 L327.0 676.5" fill="none" stroke="#8f8f8f" stroke-width="2"/>
<path d="M350.6 676.5 L360.1 651.4 L435.3 651.4 L444.8 676.5" fill="none" stroke="#8f8f8f" stroke-width="2"/>
<path d="M350 676.5 L359.3 561.3 L434.5 561.3 L443.8 676.5" fill="none" stroke="#f6d20a" stroke-width="3.2"/>
<rect x="343" y="532" width="108.5" height="18" fill="#fff" stroke="#f6d20a" stroke-width="3"/>
<text x="397.5" y="546" text-anchor="middle" font-family="Liberation Sans" font-size="13.3" fill="#333">★ Makostroje ★</text>
</svg>
<svg class="a" style="left:505px;top:528px" width="861" height="175" viewBox="505 528 861 175">
<line x1="505" y1="539.5" x2="1331" y2="539.5" stroke="#cfe0bf" stroke-width="1" stroke-dasharray="3 3"/>
<line x1="505" y1="562.7" x2="1331" y2="562.7" stroke="#cfe0bf" stroke-width="1" stroke-dasharray="3 3"/>
<line x1="505" y1="585.9" x2="1331" y2="585.9" stroke="#cfe0bf" stroke-width="1" stroke-dasharray="3 3"/>
<line x1="505" y1="609.0" x2="1331" y2="609.0" stroke="#cfe0bf" stroke-width="1" stroke-dasharray="3 3"/>
<line x1="505" y1="632.2" x2="1331" y2="632.2" stroke="#8fcf7f" stroke-width="1" stroke-dasharray="3 3"/>
<line x1="505" y1="655.4" x2="1331" y2="655.4" stroke="#f7dcb8" stroke-width="1" stroke-dasharray="3 3"/>
<line x1="1331.5" y1="538" x2="1331.5" y2="679" stroke="#b0b0b0" stroke-width="1"/>
<line x1="505" y1="678.5" x2="1331" y2="678.5" stroke="#b8a8a8" stroke-width="1"/>
<text x="1336" y="545.0" font-family="Liberation Sans" font-weight="bold" font-size="13" fill="#4a9a2a">-30</text>
<text x="1336" y="568.1" font-family="Liberation Sans" font-weight="bold" font-size="13" fill="#4a9a2a">-40</text>
<text x="1336" y="591.2" font-family="Liberation Sans" font-weight="bold" font-size="13" fill="#4a9a2a">-50</text>
<text x="1336" y="614.2" font-family="Liberation Sans" font-weight="bold" font-size="13" fill="#4a9a2a">-60</text>
<text x="1336" y="637.3" font-family="Liberation Sans" font-weight="bold" font-size="13" fill="#4a9a2a">-70</text>
<text x="1336" y="660.4" font-family="Liberation Sans" font-weight="bold" font-size="13" fill="#f29b2a">-80</text>
<text x="1336" y="683.5" font-family="Liberation Sans" font-weight="bold" font-size="13" fill="#ea7a7a">-90</text>
<line x1="529.5" y1="678" x2="529.5" y2="681" stroke="#555" stroke-width="1"/>
<line x1="554.0" y1="678" x2="554.0" y2="681" stroke="#555" stroke-width="1"/>
<line x1="578.5" y1="678" x2="578.5" y2="681" stroke="#555" stroke-width="1"/>
<line x1="603.0" y1="678" x2="603.0" y2="681" stroke="#555" stroke-width="1"/>
<line x1="627.5" y1="678" x2="627.5" y2="681" stroke="#555" stroke-width="1"/>
<line x1="652.0" y1="678" x2="652.0" y2="681" stroke="#555" stroke-width="1"/>
<line x1="676.5" y1="678" x2="676.5" y2="681" stroke="#555" stroke-width="1"/>
<line x1="701.0" y1="678" x2="701.0" y2="681" stroke="#555" stroke-width="1"/>
<line x1="921.2" y1="678" x2="921.2" y2="681" stroke="#555" stroke-width="1"/>
<line x1="945.6" y1="678" x2="945.6" y2="681" stroke="#555" stroke-width="1"/>
<line x1="970.0" y1="678" x2="970.0" y2="681" stroke="#555" stroke-width="1"/>
<line x1="994.4" y1="678" x2="994.4" y2="681" stroke="#555" stroke-width="1"/>
<line x1="1018.8" y1="678" x2="1018.8" y2="681" stroke="#555" stroke-width="1"/>
<line x1="1043.2" y1="678" x2="1043.2" y2="681" stroke="#555" stroke-width="1"/>
<line x1="1067.6" y1="678" x2="1067.6" y2="681" stroke="#555" stroke-width="1"/>
<line x1="1092.0" y1="678" x2="1092.0" y2="681" stroke="#555" stroke-width="1"/>
<line x1="1116.4" y1="678" x2="1116.4" y2="681" stroke="#555" stroke-width="1"/>
<line x1="1140.8" y1="678" x2="1140.8" y2="681" stroke="#555" stroke-width="1"/>
<line x1="1165.2" y1="678" x2="1165.2" y2="681" stroke="#555" stroke-width="1"/>
<line x1="1190.0" y1="678" x2="1190.0" y2="681" stroke="#555" stroke-width="1"/>
<line x1="1220.7" y1="678" x2="1220.7" y2="681" stroke="#555" stroke-width="1"/>
<line x1="1245.1" y1="678" x2="1245.1" y2="681" stroke="#555" stroke-width="1"/>
<line x1="1269.5" y1="678" x2="1269.5" y2="681" stroke="#555" stroke-width="1"/>
<line x1="1293.9" y1="678" x2="1293.9" y2="681" stroke="#555" stroke-width="1"/>
<line x1="1318.3" y1="678" x2="1318.3" y2="681" stroke="#555" stroke-width="1"/>
<text x="529.5" y="696" text-anchor="middle" font-family="Liberation Sans" font-size="13" fill="#555">36</text>
<text x="554.0" y="696" text-anchor="middle" font-family="Liberation Sans" font-size="13" fill="#555">40</text>
<text x="578.5" y="696" text-anchor="middle" font-family="Liberation Sans" font-size="13" fill="#555">44</text>
<text x="603.0" y="696" text-anchor="middle" font-family="Liberation Sans" font-size="13" fill="#555">48</text>
<text x="627.5" y="696" text-anchor="middle" font-family="Liberation Sans" font-size="13" fill="#555">52</text>
<text x="652.0" y="696" text-anchor="middle" font-family="Liberation Sans" font-size="13" fill="#555">56</text>
<text x="676.5" y="696" text-anchor="middle" font-family="Liberation Sans" font-size="13" fill="#555">60</text>
<text x="701.0" y="696" text-anchor="middle" font-family="Liberation Sans" font-size="13" fill="#555">64</text>
<text x="921.2" y="696" text-anchor="middle" font-family="Liberation Sans" font-size="13" fill="#555">100</text>
<text x="970.0" y="696" text-anchor="middle" font-family="Liberation Sans" font-size="13" fill="#555">108</text>
<text x="1018.7" y="696" text-anchor="middle" font-family="Liberation Sans" font-size="13" fill="#555">116</text>
<text x="1067.9" y="696" text-anchor="middle" font-family="Liberation Sans" font-size="13" fill="#555">124</text>
<text x="1116.6" y="696" text-anchor="middle" font-family="Liberation Sans" font-size="13" fill="#555">132</text>
<text x="1165.4" y="696" text-anchor="middle" font-family="Liberation Sans" font-size="13" fill="#555">140</text>
<text x="1220.7" y="696" text-anchor="middle" font-family="Liberation Sans" font-size="13" fill="#555">149</text>
<text x="1269.5" y="696" text-anchor="middle" font-family="Liberation Sans" font-size="13" fill="#555">157</text>
<text x="1318.3" y="696" text-anchor="middle" font-family="Liberation Sans" font-size="13" fill="#555">165</text>
</svg>
<div class="a" style="left:0;top:703px;width:1366px;height:25px;background:#e9eff8"></div>
<div class="t" style="left:10px;top:710px;font-size:13px;letter-spacing:-0.2px;color:#1f4f7e">Connected Devices:</div>
<svg class="a" style="left:131px;top:710px" width="13" height="13" viewBox="0 0 13 13">
<circle cx="6.5" cy="6.5" r="6.5" fill="#3aae48"/><path d="M3.3 6.8 L5.6 9 L9.8 4.3" fill="none" stroke="#fff" stroke-width="1.8"/></svg>
<div class="t" style="left:151px;top:710px;font-size:12.2px;letter-spacing:-0.15px;color:#1f4f7e">Qualcomm Atheros AR956x Wireless Network Adapter [scan]</div>
<div class="t" style="left:1106px;top:710.5px;font-size:11.8px;font-weight:bold;color:#1060b0;text-decoration:underline">Upgrade to MetaGeek Plus</div>
<div class="t" style="left:1281px;top:711.5px;font-size:11.5px;color:#9aa0a8">Version</div>
<div class="t" style="left:1324px;top:710.5px;font-size:12px;font-weight:bold;color:#333">5.4.0</div>
<div class="a" style="left:1364px;top:45px;width:2px;height:683px;background:#dde0e4"></div>
<div class="a" style="left:0;top:728px;width:1366px;height:40px;background:linear-gradient(90deg,#cde3ec 0%,#d1e3ed 40%,#d8e2ed 80%,#dae1ec 100%)"></div>
<svg class="a" style="left:16px;top:740px" width="16" height="16" viewBox="0 0 16 16">
<path d="M0 2.2 L6.8 1.25 V7.3 H0Z M7.9 1.1 L16 0 V7.3 H7.9Z M0 8.4 H6.8 V14.75 L0 13.8Z M7.9 8.4 H16 V16 L7.9 14.9Z" fill="#000"/></svg>
<div class="a" style="left:48px;top:728px;width:343px;height:40px;background:#fff;border:1px solid #c9d3da;border-bottom:none"></div>
<svg class="a" style="left:60px;top:740px" width="16" height="16" viewBox="0 0 16 16">
<circle cx="10" cy="6" r="5.2" fill="none" stroke="#111" stroke-width="1.3"/><path d="M6.3 9.7 L0.6 15.4" stroke="#111" stroke-width="1.4"/></svg>
<div class="t" style="left:88px;top:742px;font-size:14.6px;color:#222">Sem zadejte hledaný výraz</div>
<div class="a" style="left:408px;top:740px;width:15.5px;height:15.5px;border-radius:50%;border:2px solid #111"></div>
<svg class="a" style="left:455px;top:739px" width="18" height="17" viewBox="0 0 18 17">
<g fill="none" stroke="#111" stroke-width="1.3">
<path d="M1.3 1 V3.4 H11.5 V1"/><rect x="1.3" y="5.3" width="10.2" height="6"/><path d="M1.3 15.8 V13.3 H11.5 V15.8"/>
<path d="M15.5 1 V3.5 M15.5 9.4 V15.8"/></g><rect x="14.2" y="5.2" width="2.7" height="2.5" fill="#111"/></svg>
<svg class="a" style="left:504px;top:738px" width="22" height="19" viewBox="0 0 22 19">
<rect x="0" y="1.8" width="21.8" height="16" rx="0.6" fill="#fcd35a"/>
<rect x="0" y="0.6" width="9.6" height="3.2" rx="0.5" fill="#dfa624"/>
<path d="M4 18.8 V10.4 H17.8 V18.8 H14.1 V14.1 H7.7 V18.8Z" fill="#3a8ed6"/></svg>
<svg class="a" style="left:552.5px;top:736.2px" width="23" height="23" viewBox="0 0 23 23"><path d="M11.50 6.50 L21.63 6.50 A11.3 11.3 0 0 1 10.76 22.78 L15.83 14.00 A5.0 5.0 0 0 0 11.50 6.50Z" fill="#f7c51f"/><path d="M15.83 14.00 L10.76 22.78 A11.3 11.3 0 0 1 2.10 5.22 L7.17 14.00 A5.0 5.0 0 0 0 15.83 14.00Z" fill="#1fa463"/><path d="M7.17 14.00 L2.10 5.22 A11.3 11.3 0 0 1 21.63 6.50 L11.50 6.50 A5.0 5.0 0 0 0 7.17 14.00Z" fill="#dd4b3e"/><circle cx="11.5" cy="11.5" r="5.0" fill="#fff"/><circle cx="11.5" cy="11.5" r="4.0" fill="#4c8bf5"/></svg>
<div class="a" style="left:544px;top:766px;width:40px;height:2px;background:#1a6cc8"></div>
<svg class="a" style="left:604px;top:736px" width="18" height="24" viewBox="0 0 18 24">
<rect x="0" y="0" width="18" height="24" rx="1" fill="#6f7680"/>
<rect x="1.5" y="1.5" width="15" height="4" fill="#49c4ee"/>
<g fill="#d7dbe0"><rect x="1.5" y="7.5" width="4" height="4"/><rect x="7" y="7.5" width="4" height="4"/><rect x="12.5" y="7.5" width="4" height="4"/>
<rect x="1.5" y="13" width="4" height="4"/><rect x="7" y="13" width="4" height="4"/><rect x="1.5" y="18.5" width="4" height="4"/><rect x="7" y="18.5" width="4" height="4"/></g>
<rect x="12.5" y="13" width="4" height="9.5" fill="#1a4f9c"/></svg>
<svg class="a" style="left:652px;top:736px" width="20" height="24" viewBox="0 0 20 24">
<path d="M2.2 1.2 H10.8 L19 9.4 V21.8 Q19 23 17.8 23 H2.2 Q1 23 1 21.8 V2.4 Q1 1.2 2.2 1.2Z" fill="#fff" stroke="#2a7bbd" stroke-width="1.7"/>
<path d="M13.2 0.4 H19.8 V7Z" fill="#2a7bbd"/>
<g stroke="#2a6ea8" stroke-width="1.3" fill="none"><path d="M4.3 10.6 H8 M4.3 13.4 H8 M4.3 16.6 H16 M4.3 19.6 H13"/>
<rect x="9.6" y="10" width="6.2" height="3.8"/></g></svg>
<div class="a" style="left:687px;top:728px;width:48px;height:40px;background:#e6eff5"></div>
<div class="a" style="left:687px;top:766px;width:48px;height:2px;background:#1a6cc8"></div>
<svg class="a" style="left:699px;top:736px" width="24" height="24" viewBox="0 0 24 24">
<path d="M12 0 A12 12 0 1 0 12 24 H24 V12 A12 12 0 0 0 12 0Z" fill="#8eb43c"/>
<path d="M6 17 A11 11 0 0 1 17 6" stroke="#f4f7ea" stroke-width="1.8" fill="none"/>
<path d="M9 17 A8 8 0 0 1 17 9" stroke="#f4f7ea" stroke-width="1.8" fill="none"/>
<path d="M12 17 A5 5 0 0 1 17 12" stroke="#f4f7ea" stroke-width="1.8" fill="none"/>
<circle cx="17" cy="17" r="1.5" fill="#f4f7ea"/></svg>
<svg class="a" style="left:1132px;top:743px" width="14" height="9" viewBox="0 0 14 9">
<path d="M1 8 L7 1.5 L13 8" fill="none" stroke="#111" stroke-width="1.2"/></svg>
<svg class="a" style="left:1157px;top:739px" width="13" height="17" viewBox="0 0 13 17">
<path d="M2.5 3 A5 3 0 0 1 8.5 3 M2.5 14 A5 3 0 0 0 8.5 14" fill="none" stroke="#111" stroke-width="1"/>
<rect x="1" y="5.2" width="7.5" height="6.5" rx="1" fill="none" stroke="#111" stroke-width="1.1"/>
<path d="M8.5 7.5 L12 5.5 V11.5 L8.5 9.5" fill="none" stroke="#111" stroke-width="1.1"/></svg>
<svg class="a" style="left:1179px;top:742px" width="17" height="11" viewBox="0 0 17 11">
<path d="M1 1 V3 M3.5 1 V3 M0.5 3 H4 V5 Q4 6.5 2.25 6.5 Q0.5 6.5 0.5 5Z M2.25 6.5 V10.5" fill="none" stroke="#111" stroke-width="1"/>
<rect x="4.5" y="2.5" width="11" height="6.5" fill="none" stroke="#111" stroke-width="1.1"/>
<rect x="5.5" y="3.5" width="9" height="4.5" fill="#111"/><rect x="15.6" y="4.5" width="1.2" height="2.5" fill="#111"/></svg>
<svg class="a" style="left:1205px;top:742px" width="14" height="14" viewBox="0 0 14 14">
<path d="M1 13 A12 12 0 0 1 12 1.5" fill="none" stroke="#111" stroke-width="1.2"/>
<path d="M4 13 A9 9 0 0 1 12 4.5" fill="none" stroke="#111" stroke-width="1.2"/>
<path d="M7 13 A6 6 0 0 1 11 8" fill="none" stroke="#111" stroke-width="1.2"/>
<circle cx="11.5" cy="12.3" r="1.2" fill="#111"/></svg>
<svg class="a" style="left:1226px;top:740px" width="17" height="16" viewBox="0 0 17 16">
<path d="M0.6 5 H3.5 L8 1.2 V14.8 L3.5 11 H0.6Z" fill="none" stroke="#111" stroke-width="1.1"/>
<path d="M10 5.5 A3 3 0 0 1 10 10.5 M12 3.5 A6 6 0 0 1 12 12.5 M14 1.2 A9 9 0 0 1 14 14.8" fill="none" stroke="#111" stroke-width="1.1"/></svg>
<div class="t" style="left:1268.5px;top:734px;font-size:11.8px;color:#111">9:38</div>
<div class="t" style="left:1253px;top:752px;font-size:11.8px;color:#111;letter-spacing:-0.4px">24.03.2021</div>
<svg class="a" style="left:1325px;top:740px" width="17" height="17" viewBox="0 0 17 17">
<path d="M0.6 0.6 H16.4 V12.4 H10.5 L8.5 14.8 L6.5 12.4 H0.6Z" fill="none" stroke="#111" stroke-width="1.1"/></svg>
<div class="a" style="left:1361px;top:728px;width:1px;height:40px;background:#a7b0bb"></div></body></html>
